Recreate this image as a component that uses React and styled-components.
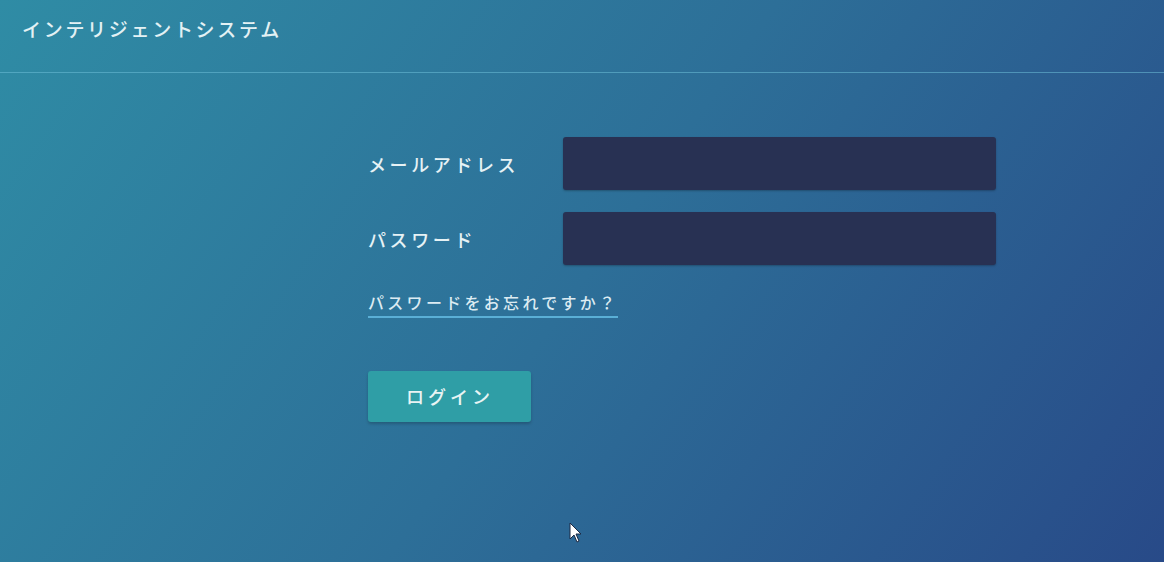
import React from "react"
import styled, { createGlobalStyle } from "styled-components"

const GlobalStyle = createGlobalStyle`
  html, body {
    margin: 0;
    padding: 0;
    height: 100%;
  }
  body {
    font-family: "Noto Sans CJK JP", "Noto Sans", sans-serif;
  }
`

const Page = styled.div`
  position: relative;
  width: 100%;
  height: 562px;
  overflow: hidden;
  color: #e6f2f5;
  background: linear-gradient(125deg, #2f8ca5 0%, #2d6f98 50%, #284a88 100%);
`

const Header = styled.header`
  height: 73px;
  box-sizing: border-box;
  padding: 0 22px 15px;
  display: flex;
  align-items: center;
  border-bottom: 1px solid rgba(110, 190, 215, 0.55);
`

const Title = styled.h1`
  margin: 0;
  font-size: 19px;
  font-weight: 500;
  letter-spacing: 2.7px;
  color: #e3f1f4;
`

const Main = styled.main`
  padding: 64px 0 0 368px;
`

const Form = styled.form`
  display: grid;
  grid-template-columns: 195px 433px;
  row-gap: 22px;
  align-items: center;
`

const Label = styled.label`
  font-size: 18px;
  font-weight: 500;
  letter-spacing: 3.6px;
  color: #e6f2f5;
`

const Input = styled.input`
  height: 53px;
  box-sizing: border-box;
  border: none;
  border-radius: 3px;
  background: #283153;
  box-shadow: 0 1px 2px rgba(0, 0, 0, 0.25);
  color: #fff;
  padding: 0 16px;
  font-size: 16px;
  outline: none;
`

const LinkRow = styled.div`
  margin-top: 25px;
`

const ForgotLink = styled.a`
  display: inline-block;
  font-size: 16px;
  line-height: 20px;
  font-weight: 500;
  letter-spacing: 3.3px;
  color: #dcebf2;
  text-decoration: none;
  padding-bottom: 4px;
  border-bottom: 2px solid #5aafd6;
  cursor: pointer;
`

const LoginButton = styled.button`
  margin-top: 53px;
  width: 163px;
  height: 51px;
  border: none;
  border-radius: 3px;
  background: #2f9ea6;
  box-shadow: 0 2px 3px rgba(0, 0, 0, 0.2);
  color: #e8f4f4;
  font-family: inherit;
  font-size: 18px;
  font-weight: 500;
  letter-spacing: 4px;
  padding: 0 0 2px 1px;
  cursor: pointer;
`

const Cursor = styled.svg`
  position: absolute;
  left: 569px;
  top: 522px;
`

const App = () => (
  <Page>
    <GlobalStyle />
    <Header>
      <Title>インテリジェントシステム</Title>
    </Header>
    <Main>
      <Form onSubmit={(e) => e.preventDefault()}>
        <Label htmlFor="email">メールアドレス</Label>
        <Input id="email" type="email" />
        <Label htmlFor="password">パスワード</Label>
        <Input id="password" type="password" />
      </Form>
      <LinkRow>
        <ForgotLink>パスワードをお忘れですか？</ForgotLink>
      </LinkRow>
      <LoginButton type="button">ログイン</LoginButton>
    </Main>
    <Cursor width="14" height="22" viewBox="0 0 14 22">
      <path
        d="M1 1 L1 17 L5 13 L8 20 L10 19 L7 12 L12 12 Z"
        fill="#fff"
        stroke="#1c2a44"
        strokeWidth="1"
      />
    </Cursor>
  </Page>
)

export default App
